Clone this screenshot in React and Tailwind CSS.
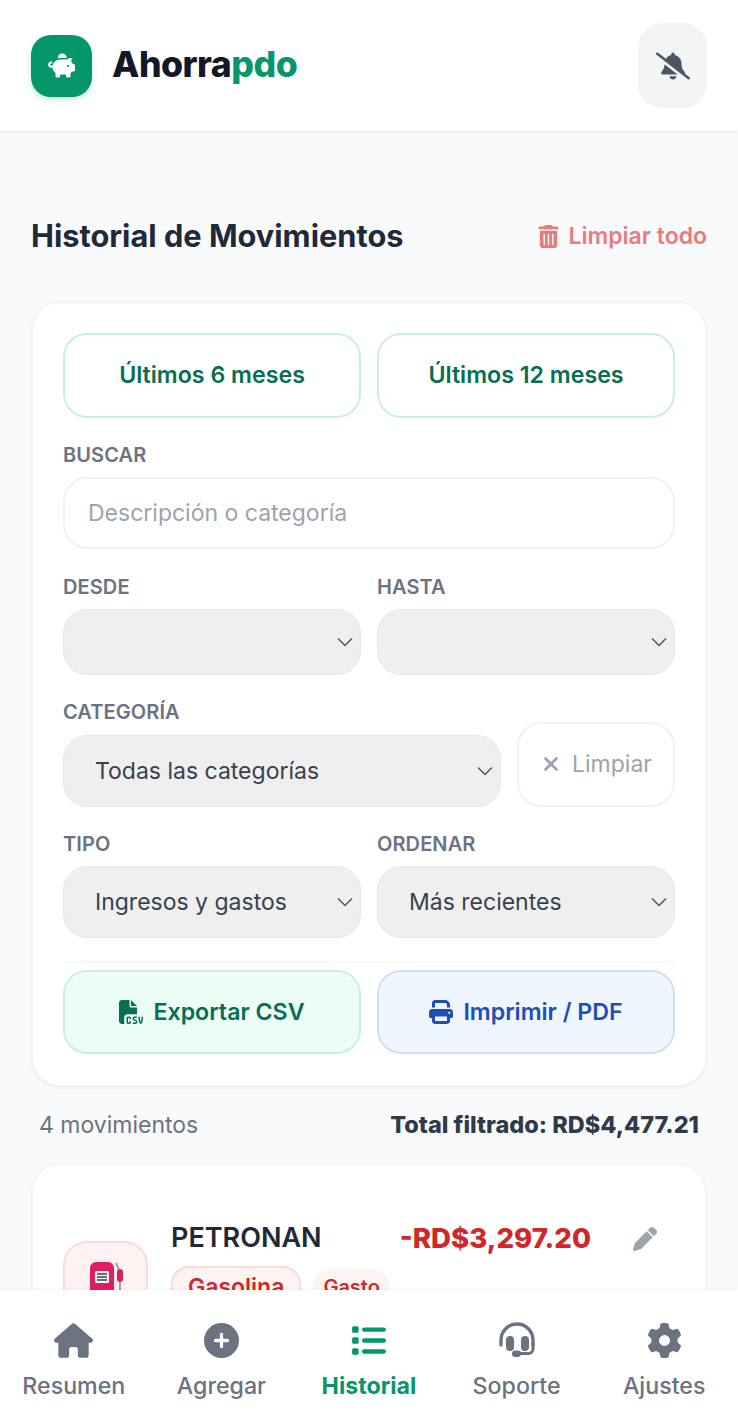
import React from "react";
import { FaPiggyBank, FaBellSlash, FaTrashCan, FaFileCsv, FaPrint, FaHouse, FaCirclePlus, FaList, FaGear, FaPen, FaXmark } from "react-icons/fa6";

const Chevron = () => (
  <svg width="18" height="10" viewBox="0 0 18 10" fill="none" stroke="#4b5563" strokeWidth="1.5" className="shrink-0">
    <path d="M2 1.5 L9 8.5 L16 1.5" />
  </svg>
);

const Headset = () => (
  <svg width="38" height="36" viewBox="0 0 38 36">
    <path d="M3 23 V18 A16 16 0 0 1 35 18 V23" fill="none" stroke="currentColor" strokeWidth="3.4" strokeLinecap="round" />
    <rect x="8" y="14" width="8" height="15" rx="4" fill="currentColor" />
    <rect x="23" y="14" width="8" height="15" rx="4" fill="currentColor" />
    <path d="M35 22 V27 A4.5 4.5 0 0 1 30.500 31.500 H20" fill="none" stroke="currentColor" strokeWidth="3" strokeLinecap="round" />
    <rect x="14" y="28.500" width="9" height="6.500" rx="3.200" fill="currentColor" />
  </svg>
);

const Label = ({ children }) => (
  <div className="text-[20px] leading-[24px] font-semibold text-[#6b7280] tracking-[0.1px]">{children}</div>
);

const Select = ({ text, h = "h-[72px]" }) => (
  <div className={`${h} rounded-[24px] bg-[#efefef] border border-[#e5e7eb] flex items-center justify-between pl-[31px] pr-[6px] text-[23px] text-[#374151]`}>
    <span>{text}</span>
    <Chevron />
  </div>
);

const NavItem = ({ icon, label, active }) => (
  <div className={`flex-1 flex flex-col items-center gap-[12px] ${active ? "text-[#059669] font-bold" : "text-[#6b7280] font-medium"}`}>
    <div className="h-[38px] flex items-center justify-center">{icon}</div>
    <span className="text-[23.2px] leading-[30px]">{label}</span>
  </div>
);

const FuelPump = () => (
  <svg width="33" height="48" viewBox="0 0 33 48">
    <rect x="0" y="0" width="24" height="48" rx="6" fill="#e11d5f" />
    <rect x="5" y="9" width="14" height="12" rx="1.5" fill="#f3f4f6" />
    <path d="M7 12h10M7 15h10M7 18h10" stroke="#374151" strokeWidth="1.4" />
    <path d="M26 1l4 9v24" stroke="#9ca3af" strokeWidth="2" fill="none" />
    <rect x="27" y="7" width="6" height="13" rx="3" fill="#e11d5f" />
  </svg>
);

export default function App() {
  return (
    <div className="w-[738px] h-[1425px] flex flex-col overflow-hidden bg-[#f9fafb] font-['Inter',sans-serif]">
      <header className="relative z-10 h-[131px] shrink-0 bg-white shadow-[0_1px_4px_rgba(0,0,0,0.08)] flex items-center justify-between pl-[31px] pr-[31px]">
        <div className="flex items-center gap-[20px]">
          <div className="w-[61px] h-[62px] rounded-[20px] bg-[#059669] shadow-[0_3px_6px_rgba(5,150,105,0.2)] flex items-center justify-center text-white">
            <FaPiggyBank className="text-[27px]" />
          </div>
          <div className="text-[35.6px] leading-[44px] mb-[2px] font-extrabold tracking-[-0.5px] text-[#111827]">
            Ahorra<span className="text-[#059669]">pdo</span>
          </div>
        </div>
        <div className="w-[69px] h-[85px] rounded-[24px] bg-[#f3f4f6] flex items-center justify-center text-[#4b5563]">
          <FaBellSlash className="text-[34px]" />
        </div>
      </header>

      <main className="flex-1 min-h-0 overflow-hidden px-[32px]">
        <div className="mt-[84px] flex items-center justify-between h-[42px]">
          <h1 className="text-[30.75px] font-bold text-[#1f2937] -ml-px">Historial de Movimientos</h1>
          <div className="flex items-center gap-[9px] text-[23px] font-semibold text-[#ec7a7c] -mr-px">
            <FaTrashCan className="text-[23px]" />
            <span>Limpiar todo</span>
          </div>
        </div>

        <section className="mt-[45px] h-[784px] bg-white rounded-[28px] shadow-[0_1px_4px_rgba(0,0,0,0.07)] border border-[#f3f4f6] px-[30px] pt-[30px]">
          <div className="grid grid-cols-2 gap-[16px]">
            <div className="h-[85px] rounded-[24px] border-2 border-[#c9efe2] flex items-center justify-center text-[23.2px] font-semibold text-[#066e52]">Últimos 6 meses</div>
            <div className="h-[85px] rounded-[24px] border-2 border-[#c9efe2] flex items-center justify-center text-[23.2px] font-semibold text-[#066e52]">Últimos 12 meses</div>
          </div>

          <div className="mt-[25px]">
            <Label>BUSCAR</Label>
            <div className="mt-[10px] h-[72px] rounded-[24px] border-2 border-[#f0f1f3] flex items-center pl-[23px] text-[23px] text-[#9ca3af]">Descripción o categoría</div>
          </div>

          <div className="mt-[26px] grid grid-cols-2 gap-[16px]">
            <div>
              <Label>DESDE</Label>
              <div className="mt-[10px]"><Select text="" h="h-[66px]" /></div>
            </div>
            <div>
              <Label>HASTA</Label>
              <div className="mt-[10px]"><Select text="" h="h-[66px]" /></div>
            </div>
          </div>

          <div className="mt-[25px] flex items-end gap-[16px]">
            <div className="flex-1 min-w-0">
              <Label>CATEGORÍA</Label>
              <div className="mt-[11px]"><Select text="Todas las categorías" /></div>
            </div>
            <div className="w-[158px] h-[85px] rounded-[24px] border-2 border-[#f0f1f3] flex items-center justify-center gap-[10px] text-[23px] text-[#9ca3af] pb-[1px]">
              <FaXmark className="text-[22px]" />
              <span>Limpiar</span>
            </div>
          </div>

          <div className="mt-[25px] grid grid-cols-2 gap-[16px]">
            <div>
              <Label>TIPO</Label>
              <div className="mt-[10px]"><Select text="Ingresos y gastos" /></div>
            </div>
            <div>
              <Label>ORDENAR</Label>
              <div className="mt-[10px]"><Select text="Más recientes" /></div>
            </div>
          </div>

          <div className="mt-[23px] border-t border-[#f3f4f6] pt-[8px] grid grid-cols-2 gap-[16px]">
            <div className="h-[84px] rounded-[24px] bg-[#ecfdf5] border-2 border-[#c9efe2] flex items-center justify-center gap-[10px] text-[23.2px] font-semibold text-[#066e52]">
              <FaFileCsv className="text-[24px]" />
              <span>Exportar CSV</span>
            </div>
            <div className="h-[84px] rounded-[24px] bg-[#eff6ff] border-2 border-[#cfe0f4] flex items-center justify-center gap-[10px] text-[23.2px] font-semibold text-[#1e4eb8]">
              <FaPrint className="text-[24px]" />
              <span>Imprimir / PDF</span>
            </div>
          </div>
        </section>

        <div className="mt-[22px] flex items-center justify-between px-[7px] h-[34px]">
          <span className="text-[23px] text-[#6b7280]">4 movimientos</span>
          <span className="text-[23.5px] font-extrabold text-[#2f3a4a]">Total filtrado: RD$4,477.21</span>
        </div>

        <section className="mt-[22px] h-[300px] bg-white rounded-[28px] shadow-[0_1px_4px_rgba(0,0,0,0.06)] border border-[#f3f4f6] pl-[30px] pr-[48px] pt-[53px] flex gap-[23px]">
          <div className="mt-[23px] w-[85px] h-[85px] shrink-0 rounded-[24px] bg-[#fef2f2] border-2 border-[#fbdada] flex justify-center pt-[19px] pl-[2px]">
            <FuelPump />
          </div>
          <div className="flex-1 min-w-0">
            <div className="flex items-center justify-between">
              <span className="text-[27px] font-semibold text-[#1f2937]">PETRONAN</span>
              <span className="ml-auto text-[27.6px] font-extrabold text-[#d02828]">-RD$3,297.20</span>
              <FaPen className="ml-[42px] text-[24px] text-[#9ca3af]" />
            </div>
            <div className="mt-[7px] flex items-center gap-[12px]">
              <span className="h-[42px] px-[15px] rounded-[18px] bg-[#fef2f2] border-2 border-[#fbdada] text-[23px] font-semibold text-[#d02828] flex items-center">Gasolina</span>
              <span className="h-[36px] px-[10px] rounded-[18px] bg-[#fef2f2] text-[20px] font-semibold text-[#d02828] flex items-center">Gasto</span>
            </div>
          </div>
        </section>
      </main>

      <nav className="relative z-10 h-[135px] shrink-0 bg-white shadow-[0_-1px_3px_rgba(0,0,0,0.05)] flex pt-[31px]">
        <NavItem icon={<FaHouse className="text-[39px]" />} label="Resumen" />
        <NavItem icon={<FaCirclePlus className="text-[35px]" />} label="Agregar" />
        <NavItem icon={<FaList className="text-[35px]" />} label="Historial" active />
        <NavItem icon={<Headset />} label="Soporte" />
        <NavItem icon={<FaGear className="text-[35px]" />} label="Ajustes" />
      </nav>
    </div>
  );
}
